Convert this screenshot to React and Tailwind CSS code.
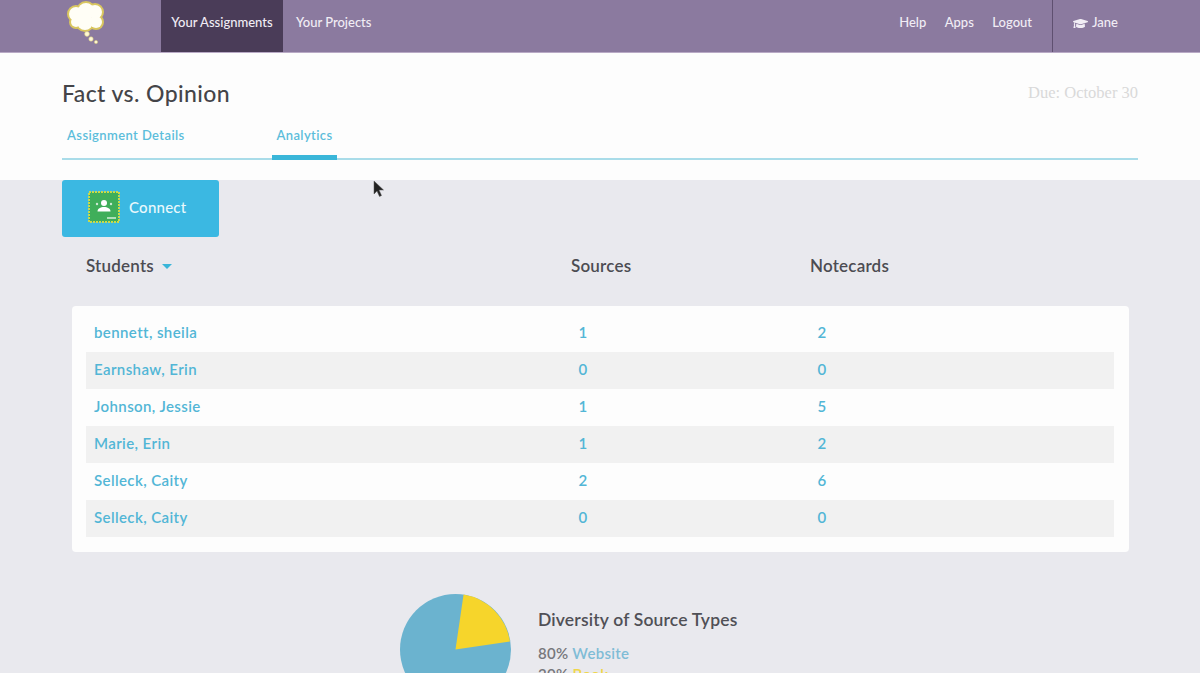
import { FaGraduationCap } from 'react-icons/fa';

const students = [
  { name: 'bennett, sheila', sources: 1, notecards: 2 },
  { name: 'Earnshaw, Erin', sources: 0, notecards: 0 },
  { name: 'Johnson, Jessie', sources: 1, notecards: 5 },
  { name: 'Marie, Erin', sources: 1, notecards: 2 },
  { name: 'Selleck, Caity', sources: 2, notecards: 6 },
  { name: 'Selleck, Caity', sources: 0, notecards: 0 },
];

function Logo() {
  return (
    <svg width="42" height="46" viewBox="0 0 42 46" className="ml-[65px] self-start blur-[0.5px]">
      <g fill="#d9c65f">
        <circle cx="11" cy="14" r="9" />
        <circle cx="21" cy="11" r="10" />
        <circle cx="30" cy="12" r="9" />
        <circle cx="31" cy="22" r="8" />
        <circle cx="20" cy="22" r="10" />
        <circle cx="11" cy="22" r="7" />
      </g>
      <g fill="#fffef6">
        <circle cx="11" cy="14" r="7" />
        <circle cx="21" cy="11" r="8" />
        <circle cx="30" cy="12" r="7" />
        <circle cx="31" cy="22" r="6" />
        <circle cx="20" cy="22" r="8" />
        <circle cx="11" cy="22" r="5" />
      </g>
      <g fill="#fff9d6" stroke="#d8cb80" strokeWidth="0.6">
        <circle cx="22" cy="34" r="2.4" />
        <circle cx="26" cy="39" r="2.2" />
        <circle cx="31" cy="42" r="1.6" />
      </g>
    </svg>
  );
}

function ClassroomIcon() {
  return (
    <svg width="32" height="32" viewBox="0 0 32 32">
      <rect x="1" y="1" width="30" height="30" fill="#3fae5a" stroke="#c9d94a" strokeWidth="2" strokeDasharray="2 1" />
      <circle cx="16" cy="12" r="3" fill="#fff" />
      <path d="M9.5 20.500c0-3 3-4.500 6.500-4.500s6.500 1.500 6.500 4.500z" fill="#fff" />
      <circle cx="9" cy="13" r="1.200" fill="#cfe9d5" />
      <circle cx="23" cy="13" r="1.200" fill="#cfe9d5" />
      <path d="M19 27h9" stroke="#d6efda" strokeWidth="1.500" />
    </svg>
  );
}

export default function App() {
  return (
    <div className="relative h-[673px] overflow-hidden bg-[#e9e9ee] font-['Lato','Open_Sans',sans-serif] text-[#47474d]">
      {/* Top nav */}
      <nav className="flex h-[53px] items-stretch border-b border-[#b9aac6] bg-[#8b7a9f] text-[13px] font-medium text-[#f1edf5]">
        <Logo />
        <a className="ml-[54px] flex w-[122px] items-center justify-center bg-[#4a3c58] pb-[6px]">Your Assignments</a>
        <a className="ml-[13px] flex items-center pb-[6px]">Your Projects</a>
        <div className="ml-auto flex items-center gap-[18.500px] pr-[20px] pb-[6px]">
          <a>Help</a>
          <a>Apps</a>
          <a>Logout</a>
        </div>
        <div className="mr-[92px] flex w-[56px] items-center gap-[4px] border-l border-[#5f5070] pb-[6px] pl-[20px]">
          <FaGraduationCap className="shrink-0 text-[15px]" />
          <span>Jane</span>
        </div>
      </nav>

      {/* Assignment header */}
      <header className="h-[127px] bg-[#fdfdfd] px-[62px]">
        <div className="flex items-center justify-between pt-[25px]">
          <h1 className="text-[23px] leading-[30px] font-medium tracking-[0.4px] text-[#444448]">Fact vs. Opinion</h1>
          <span className="pt-[1px] font-['Liberation_Serif',serif] text-[16.500px] text-[#d9d9d9]">Due: October 30</span>
        </div>
        <div className="mt-[15px] flex h-[37px] items-start border-b-[2px] border-[#a9dce9] text-[13px] font-semibold tracking-[0.4px] text-[#5cbddb]">
          <a className="h-[35px] w-[210px] px-[5px] pt-[3px]">Assignment Details</a>
          <a className="h-[37px] w-[65px] border-b-[5px] border-[#3ab6d9] pt-[3px] text-center">Analytics</a>
        </div>
      </header>

      <main className="px-[62px]">
        <button className="flex h-[57px] w-[157px] items-center gap-[9px] rounded-[3px] bg-[#3bb8e2] pb-[3px] pl-[26px] text-[15px] font-medium tracking-[0.25px] text-[#e9f8fc]">
          <ClassroomIcon />
          Connect
        </button>

        {/* Table heading */}
        <div className="mt-[18px] grid grid-cols-[485px_239px_1fr] pl-[24px] text-[17px] leading-[22px] font-semibold tracking-[0.2px] text-[#4c4c52]">
          <div className="flex items-center gap-[8px]">
            Students
            <span className="mt-[1px] h-0 w-0 border-x-[5.500px] border-t-[5px] border-x-transparent border-t-[#3ab6d9]" />
          </div>
          <div>Sources</div>
          <div>Notecards</div>
        </div>

        {/* Students card */}
        <div className="mt-[29px] ml-[10px] w-[1057px] rounded-[4px] bg-[#fdfdfd] pt-[9px] pr-[15px] pb-[15px] pl-[14px]">
          {students.map((s, i) => (
            <div
              key={i}
              className="grid h-[37px] grid-cols-[484px_239px_1fr] items-center pb-[2px] pl-[8px] text-[15px] font-semibold tracking-[0.4px] text-[#52b6d6] even:bg-[#f1f1f1]"
            >
              <div>{s.name}</div>
              <div className="w-[10px] text-center">{s.sources}</div>
              <div className="w-[10px] text-center">{s.notecards}</div>
            </div>
          ))}
        </div>

        {/* Source types */}
        <section className="mt-[42px] ml-[338px] flex items-start gap-[27px]">
          <svg width="111" height="111" viewBox="0 0 110 110" className="shrink-0">
            <circle cx="55" cy="55" r="55" fill="#6bb3cf" />
            <path d="M55 55 L63 0.600 A55 55 0 0 1 109 47 Z" fill="#f6d52b" />
          </svg>
          <div className="pt-[15px]">
            <h2 className="text-[17.500px] leading-[22px] font-semibold tracking-[0.17px] text-[#505056]">Diversity of Source Types</h2>
            <p className="mt-[12px] text-[15px] leading-[20px] font-semibold tracking-[0.3px] text-[#77777c]">
              80% <span className="text-[#7fbcd6]">Website</span>
            </p>
            <p className="mt-[1px] text-[15px] leading-[20px] font-semibold tracking-[0.3px] text-[#77777c]">
              20% <span className="text-[#f0d64a]">Book</span>
            </p>
          </div>
        </section>
      </main>

      {/* Mouse pointer */}
      <svg width="12" height="18" viewBox="0 0 12 18" className="absolute top-[180px] left-[373px]">
        <path d="M1 1v13l3-3 2.500 5.500 2-1L6 10h4.500z" fill="#222" stroke="#555" strokeWidth="0.500" />
      </svg>
    </div>
  );
}
